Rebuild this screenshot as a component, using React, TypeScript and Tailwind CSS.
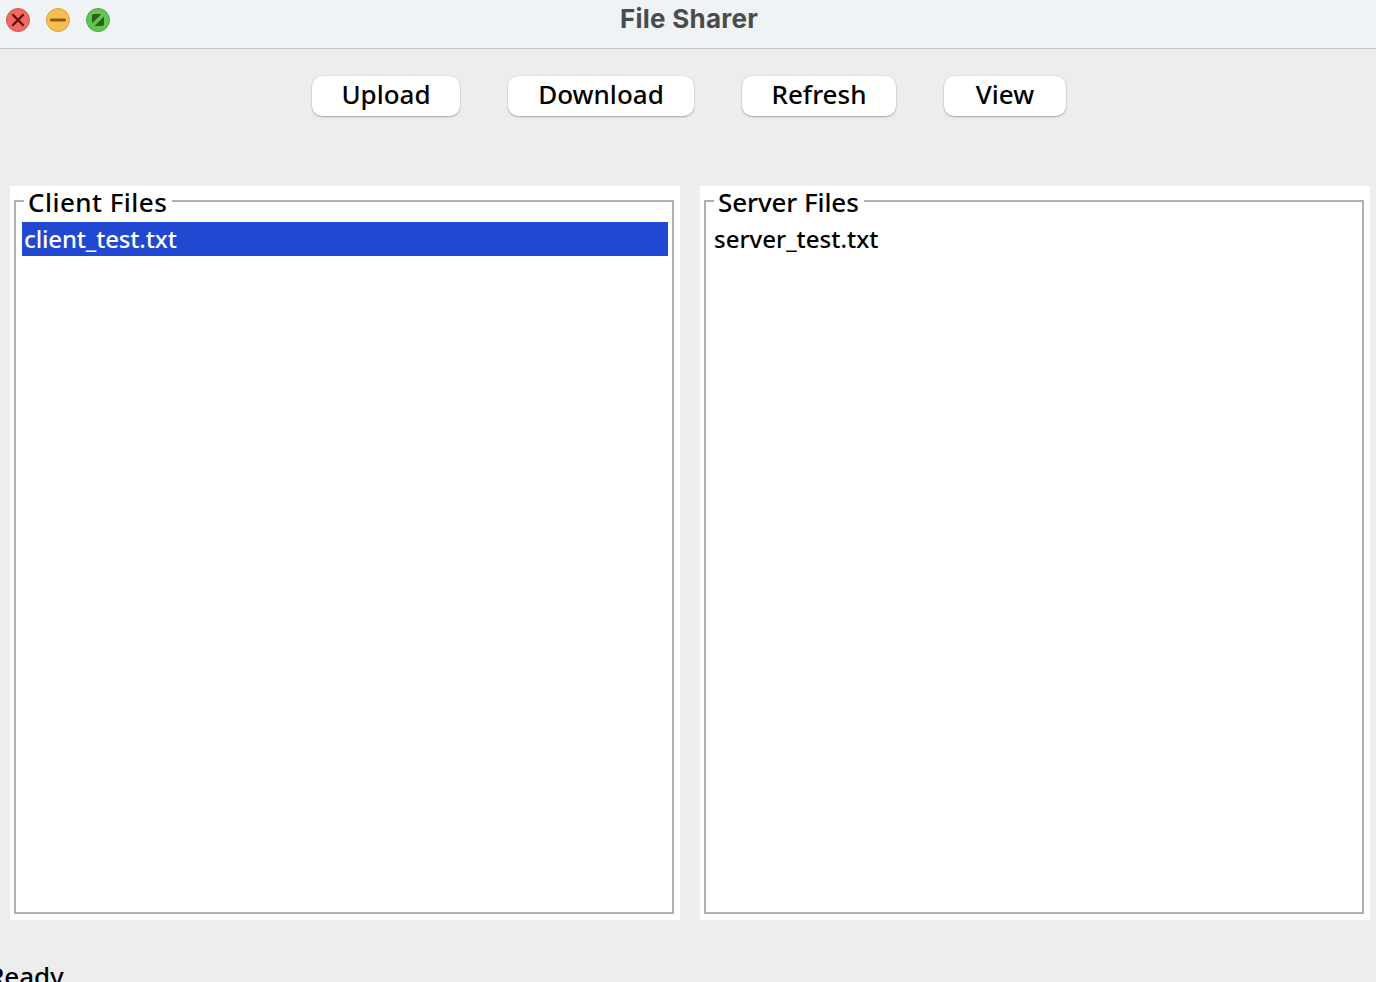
import React from "react";

function WindowControls() {
  return (
    <svg width="112" height="26" viewBox="0 0 112 26" className="block">
      <circle cx="18" cy="13" r="11.5" fill="#ed6b60" stroke="#d95549" />
      <path d="M13 8l10 10M23 8L13 18" stroke="#6b0d08" strokeWidth="2.4" strokeLinecap="round" />
      <circle cx="58" cy="13" r="11.5" fill="#f5be4f" stroke="#dba23c" />
      <path d="M51.3 13h13.4" stroke="#90591d" strokeWidth="2.8" strokeLinecap="round" />
      <circle cx="98" cy="13" r="11.5" fill="#61c654" stroke="#4fab42" />
      <path d="M92 16.500V9a2 2 0 0 1 2-2h7.500z" fill="#2a6218" />
      <path d="M104 9.500v7.500a2 2 0 0 1-2 2h-7.500z" fill="#2a6218" />
    </svg>
  );
}

function ToolButton({ label, className }: { label: string; className: string }) {
  return (
    <button
      className={`flex h-10 items-center justify-center rounded-[10px] bg-white pb-1 text-[26px] leading-none whitespace-nowrap shadow-[0_1px_2px_rgba(0,0,0,0.28),0_0_1px_rgba(0,0,0,0.2)] ${className}`}
    >
      {label}
    </button>
  );
}

function FilePanel({
  title,
  file,
  selected = false,
  titleClass,
  fileClass,
}: {
  title: string;
  file: string;
  selected?: boolean;
  titleClass: string;
  fileClass: string;
}) {
  return (
    <section className="h-[734px] w-[670px] bg-white pr-[6px] pb-[6px] pl-1">
      <fieldset className="h-[728px] w-[660px] min-w-0 border-2 border-[#b0b0b0] pt-[6px] pr-1 pl-[6px]">
        <legend className={`ml-[2px] h-[30px] pt-[2px] pl-1 text-[26px] leading-[28px] whitespace-nowrap ${titleClass}`}>
          {title}
        </legend>
        <div
          className={`h-[34px] pl-[2px] text-[24px] leading-[33px] whitespace-nowrap ${fileClass} ${
            selected ? "bg-[#2148d1] text-white" : "text-black"
          }`}
        >
          {file}
        </div>
      </fieldset>
    </section>
  );
}

export default function App() {
  return (
    <div className="flex h-[982px] w-[1376px] flex-col overflow-hidden bg-[#ededed] font-['Noto_Sans',sans-serif] font-medium text-black">
      <header className="grid h-[49px] shrink-0 grid-cols-[112px_1fr_112px] border-b border-[#c6c7c8] bg-[#eff3f6]">
        <div className="pt-[7px]">
          <WindowControls />
        </div>
        <h1 className="pt-[3px] pl-[2px] text-center font-['Inter',sans-serif] text-[26px] leading-8 font-bold tracking-[0.25px] text-[#4a4b4c]">
          File Sharer
        </h1>
      </header>
      <nav className="mt-[27px] ml-[312px] flex h-10 shrink-0">
        <ToolButton label="Upload" className="w-[148px]" />
        <ToolButton label="Download" className="ml-12 w-[186px]" />
        <ToolButton label="Refresh" className="ml-12 w-[154px]" />
        <ToolButton label="View" className="ml-12 w-[122px]" />
      </nav>
      <main className="mt-[70px] ml-[10px] flex shrink-0 gap-5">
        <FilePanel
          title="Client Files"
          file="client_test.txt"
          selected
          titleClass="w-[148px] tracking-[0.45px]"
          fileClass="tracking-[-0.15px]"
        />
        <FilePanel
          title="Server Files"
          file="server_test.txt"
          titleClass="w-[150px] tracking-[-0.1px]"
          fileClass=""
        />
      </main>
      <footer className="mt-[39px] -ml-[12px] h-[23px] shrink-0 text-[26px] leading-[34px] tracking-[-0.1px]">Ready</footer>
    </div>
  );
}
